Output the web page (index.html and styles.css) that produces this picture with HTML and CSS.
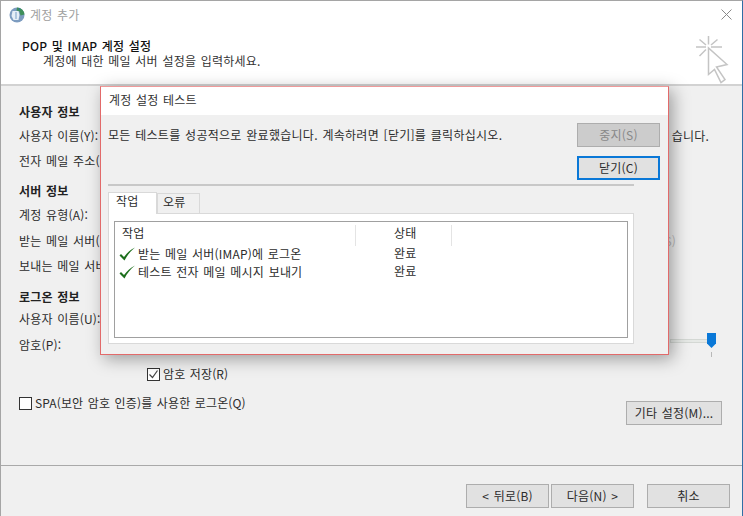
FILE: index.html
```html
<!DOCTYPE html>
<html lang="ko">
<head>
<meta charset="utf-8">
<title>계정 추가</title>
<link rel="stylesheet" href="styles.css">
</head>
<body>
<div class="window">
  <header class="head">
    <div class="titlebar">
      <svg class="globe" width="16" height="16" viewBox="0 0 16 16">
        <circle cx="8" cy="8" r="7.500" fill="#7d9cc0"/>
        <path d="M8 .5a7.500 7.500 0 0 1 7.500 7l-4 1-1-4-3-1z" fill="#3f8f5a"/>
        <path d="M10.500 1a7.500 7.500 0 0 1 1 1l-2 1z" fill="#2a6fc0"/>
        <path d="M3.500 4h6l1 4-1 5h-5l-2-4z" fill="#e6eef6"/>
        <path d="M7 5v7" stroke="#9db8d6" stroke-width="1.500"/>
      </svg>
      <span class="wintitle">계정 추가</span>
      <svg class="close" width="11" height="11" viewBox="0 0 11 11"><path d="M.5.500l10 10M10.500.500l-10 10" stroke="#8a8a8a" fill="none"/></svg>
    </div>
    <div class="heading">
      <div class="heading-text">
        <div class="h1">POP 및 IMAP 계정 설정</div>
        <div class="h2">계정에 대한 메일 서버 설정을 입력하세요.</div>
      </div>
      <svg class="spark" width="34" height="48" viewBox="0 0 34 48">
        <path d="M12.500 0v8.500M0 11h10M15 11h11M3.500 3.500L10 9M21.500 3.500L15 9M3.500 20l6.500-6.500" stroke="#c4c4c4" stroke-width="1.500" fill="none"/>
        <path d="M12.500 12v26.500l6-5 6.500 13 4-3-8.500-12.500 10.500-2.500z" fill="#fff" stroke="#c4c4c4" stroke-width="1.500"/>
      </svg>
    </div>
  </header>
  <main class="form">
    <div class="sec first">사용자 정보</div>
    <div class="row r-name"><span>사용자 이름(Y):</span><span class="behind">습니다.</span></div>
    <div class="row r-mail">전자 메일 주소(E):</div>
    <div class="sec second">서버 정보</div>
    <div class="row r-type">계정 유형(A):</div>
    <div class="row r-in"><span>받는 메일 서버(I):</span><span class="behind faint">S)</span></div>
    <div class="row r-out">보내는 메일 서버(O):</div>
    <div class="sec third">로그온 정보</div>
    <div class="row r-user">사용자 이름(U):</div>
    <div class="row r-pass">
      <span class="plabel">암호(P):</span>
      <span class="pinput"></span>
      <span class="slider"><span class="thumb"></span></span>
    </div>
    <label class="check save"><span class="box on"><svg width="11" height="11" viewBox="0 0 11 11"><path d="M1.500 5.500l3 3 5-7" stroke="#444" stroke-width="1.200" fill="none"/></svg></span>암호 저장(R)</label>
    <div class="spa-row">
      <label class="check"><span class="box"></span>SPA(보안 암호 인증)를 사용한 로그온(Q)</label>
      <button class="btn more">기타 설정(M)...</button>
    </div>
  </main>
  <footer class="foot">
    <button class="btn nav">&lt; 뒤로(B)</button>
    <button class="btn nav">다음(N) &gt;</button>
    <button class="btn nav cancel">취소</button>
  </footer>
</div>

<section class="dialog">
  <div class="d-title">계정 설정 테스트</div>
  <div class="d-body">
    <div class="d-top">
      <p class="msg">모든 테스트를 성공적으로 완료했습니다. 계속하려면 [닫기]를 클릭하십시오.</p>
      <div class="d-btns">
        <button class="btn dbtn off">중지(S)</button>
        <button class="btn dbtn focus">닫기(C)</button>
      </div>
    </div>
    <div class="rule"></div>
    <div class="tabs">
      <span class="tab active">작업</span>
      <span class="tab">오류</span>
    </div>
    <div class="panel">
      <div class="list">
        <div class="lrow lhead"><span class="c1">작업</span><span class="c2">상태</span><span class="c3"></span></div>
        <div class="lrow"><span class="c1 item"><svg class="tick" width="16" height="15" viewBox="0 0 16 15"><path d="M.5 8.500L2 7l3 3C8 6 11 3 16 .5 11.500 4 8 8.500 5.500 13.500z" fill="#1c6f1c"/></svg>받는 메일 서버(IMAP)에 로그온</span><span class="c2 val">완료</span></div>
        <div class="lrow"><span class="c1 item"><svg class="tick" width="16" height="15" viewBox="0 0 16 15"><path d="M.5 8.500L2 7l3 3C8 6 11 3 16 .5 11.500 4 8 8.500 5.500 13.500z" fill="#1c6f1c"/></svg>테스트 전자 메일 메시지 보내기</span><span class="c2 val">완료</span></div>
      </div>
    </div>
  </div>
</section>
</body>
</html>
```

FILE: styles.css
```css
* { box-sizing: border-box; }
html, body { margin: 0; height: 100%; overflow: hidden; }
body {
  font-family: "Noto Sans CJK KR", "Noto Sans", sans-serif;
  font-size: 12px;
  line-height: 16px;
  letter-spacing: .2px;
  word-spacing: 1px;
  color: #2c2c2c;
  background: #f0f0f0;
}
.window {
  width: 743px;
  height: 516px;
  display: flex;
  flex-direction: column;
  border-top: 1px solid #a5a5a5;
  border-left: 1px solid #a5a5a5;
  border-right: 1px solid #2f6ea5;
}
.head { height: 85px; flex: none; background: #fff; border-bottom: 2px solid #d2d2d2; }
.titlebar { height: 27px; display: flex; align-items: center; padding-left: 8px; }
.wintitle { margin-left: 5px; color: #a0a0a0; }
.close { margin-left: auto; margin-right: 10px; }
.heading { display: flex; justify-content: space-between; padding: 10px 12px 0 21px; }
.h1 { color: #111; font-weight: 500; }
.h2 { padding-left: 21px; color: #333; margin-top: -1px; }
.spark { margin-top: -2px; }
.form { flex: 1; padding: 18px 20px 0 18px; position: relative; }
.sec { font-weight: 700; color: #222; height: 16px; }
.row { height: 16px; display: flex; justify-content: space-between; }
.r-name { margin-top: 8px; }
.r-mail { margin-top: 9px; }
.second { margin-top: 14px; }
.r-type { margin-top: 8px; }
.r-in { margin-top: 10px; }
.r-out { margin-top: 9px; }
.third { margin-top: 15px; }
.r-user { margin-top: 6px; }
.r-pass { margin-top: 10px; justify-content: flex-start; align-items: flex-start; }
.behind { margin-right: 13px; }
.faint { color: #bbb; margin-right: 46px; }
.plabel { width: 156px; }
.pinput { width: 164px; height: 23px; margin-top: -7px; background: #fff; border: 1px solid #a8a8a8; }
.slider { width: 46px; height: 4px; margin: 2px 0 0 331px; background: #e6e9e6; border: 1px solid #d4d8d4; position: relative; }
.slider::after { content: ""; position: absolute; right: 3px; top: 12px; width: 1px; height: 5px; background: #b8b8b8; }
.thumb { position: absolute; right: -1px; top: -7px; width: 9px; height: 15px; background: #0a78d7; clip-path: polygon(0 0, 100% 0, 100% 70%, 50% 100%, 0 70%); }
.check { display: flex; align-items: center; gap: 3px; letter-spacing: .13px; }
.save { margin: 13px 0 0 128px; }
.box { width: 13px; height: 13px; background: #fff; border: 1px solid #333; display: flex; align-items: center; justify-content: center; }
.spa-row { display: flex; justify-content: space-between; align-items: flex-start; margin-top: 13px; }
.btn { font: inherit; letter-spacing: inherit; word-spacing: inherit; color: #2c2c2c; background: #e1e1e1; border: 1px solid #adadad; padding: 0; }
.more { width: 96px; height: 24px; margin-top: 6px; }
.foot { height: 51px; flex: none; border-top: 1px solid #a9a9a9; display: flex; align-items: flex-start; padding: 18px 0 0 465px; }
.nav { width: 83px; height: 24px; margin-right: 2px; }
.cancel { margin-left: 11px; margin-right: 0; }

.dialog {
  position: absolute;
  left: 100px;
  top: 86px;
  width: 569px;
  height: 269px;
  border: 1px solid #e26a6a;
  border-top-color: #ef9a9a;
  background: #f0f0f0;
  box-shadow: 4px 4px 16px rgba(0,0,0,.35);
  display: flex;
  flex-direction: column;
}
.d-title { height: 28px; flex: none; background: #fff; padding: 5px 0 0 8px; color: #333; }
.d-body { flex: 1; padding: 8px 8px 0 7px; }
.d-top { display: flex; justify-content: space-between; }
.msg { margin: 4px 0 0; letter-spacing: .27px; }
.d-btns { display: flex; flex-direction: column; gap: 9px; }
.dbtn { width: 83px; height: 24px; }
.off { background: #cccccc; color: #888; }
.focus { border: 2px solid #0a78d7; }
.rule { width: 526px; height: 2px; background: #c8c8c8; margin-top: 4px; }
.tabs { display: flex; margin-top: 5px; align-items: flex-end; height: 22px; }
.tab { width: 43px; height: 20px; padding-left: 5px; background: #f0f0f0; border: 1px solid #d9d9d9; border-bottom: 0; }
.tab.active { width: 49px; height: 22px; padding-left: 7px; background: #fff; margin-bottom: -1px; position: relative; z-index: 1; }
.panel { width: 526px; height: 131px; background: #fff; border: 1px solid #d9d9d9; padding: 7px 5px 5px; }
.list { height: 117px; border: 1px solid #a0a0a0; }
.lrow { display: flex; height: 18px; }
.lhead { height: 23px; padding-top: 3px; }
.c1 { width: 241px; padding-left: 7px; flex: none; }
.c2 { padding-left: 38px; width: 96px; flex: none; }
.lhead .c1, .lhead .c2 { border-right: 1px solid #e4e4e4; height: 21px; }
.item { padding-left: 4px; display: flex; align-items: center; }
.tick { margin-right: 3px; flex: none; }
```
